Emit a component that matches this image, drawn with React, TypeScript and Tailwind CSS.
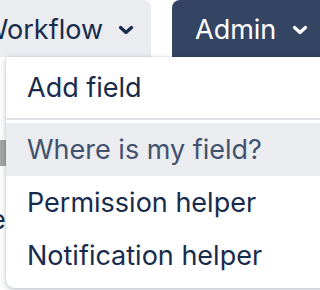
const items = [
  { label: "Where is my field?", active: true },
  { label: "Permission helper", active: false },
  { label: "Notification helper", active: false },
];

function Chevron() {
  return (
    <svg className="shrink-0" width="16" height="10" viewBox="0 0 16 10" fill="none" stroke="currentColor" strokeWidth="3.2" strokeLinecap="round" strokeLinejoin="round">
      <path d="M2.5 2.5L8 7.5L13.5 2.5" />
    </svg>
  );
}

export default function App() {
  return (
    <div
      className="relative h-[290px] w-[320px] overflow-hidden bg-white text-[#172b4d]"
      style={{ fontFamily: "Inter, 'Noto Sans', sans-serif" }}
    >
      {/* nav bar */}
      <div className="flex h-[57px] items-stretch">
        <button className="flex w-[151px] shrink-0 items-center justify-end gap-[15px] rounded-tr-[8px] bg-[#ebecf0] pr-[17px] pt-[3px] text-[27px] text-[#172b4d]">
          <span className="shrink-0 whitespace-nowrap">Workflow</span>
          <Chevron />
        </button>
        <button className="ml-[21px] flex flex-1 items-center gap-[16px] rounded-tl-[8px] bg-[#344563] pl-[23px] pt-[3px] text-[27px] text-white">
          <span className="shrink-0 whitespace-nowrap">Admin</span>
          <Chevron />
        </button>
      </div>

      {/* page content peeking out behind the menu */}
      <div className="mt-[83px] h-[26px] w-[20px] bg-[#a5a5a5]" />
      <div className="-ml-[10px] mt-[40px] text-[27px] leading-none">e</div>

      {/* dropdown menu */}
      <div className="absolute left-[6px] top-[57px] w-[330px] rounded-bl-[8px] bg-white shadow-[0_2px_6px_rgba(9,30,66,0.25),0_0_1px_rgba(9,30,66,0.3)]">
        <div className="flex h-[61px] items-center pl-[21px] pt-[2px] text-[27px]">Add field</div>
        <div className="h-[2px] bg-[#dfe1e6]" />
        <div className="pb-[6px] pt-[3px]">
          {items.map((item) => (
            <div
              key={item.label}
              className={
                item.active
                  ? "flex h-[53px] items-center bg-[#ebecf0] pl-[21px] pt-[1px] text-[27px] text-[#42526e]"
                  : "flex h-[53px] items-center pl-[21px] pt-[2px] text-[27px]"
              }
            >
              {item.label}
            </div>
          ))}
        </div>
      </div>
    </div>
  );
}
